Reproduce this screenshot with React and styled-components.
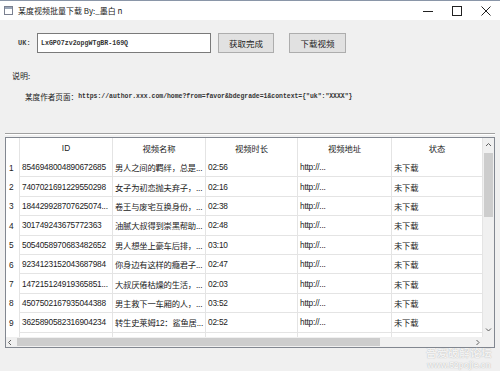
import React from "react";
import styled, { createGlobalStyle } from "styled-components";

const GlobalStyle = createGlobalStyle`
  html, body {
    margin: 0;
    padding: 0;
    width: 500px;
    height: 371px;
    overflow: hidden;
    background: #f0f0f0;
  }
  * {
    box-sizing: border-box;
  }
`;

const CJK = `"Noto Sans CJK SC", "Noto Sans", sans-serif`;
const TABLE_FONT = `"Liberation Sans", "Noto Sans CJK SC", sans-serif`;

const AUTHOR_URL =
  'https://author.xxx.com/home?from=favor&bdegrade=1&context={"uk":"XXXX"}';

const Window = styled.div`
  position: relative;
  width: 500px;
  height: 371px;
  background: #f0f0f0;
  font-family: ${CJK};
  color: #1a1a1a;
  overflow: hidden;
`;

const TitleBar = styled.div`
  display: flex;
  align-items: center;
  justify-content: space-between;
  height: 20px;
  background: #fff;
  border-top: 1px solid #8a96a8;
`;

const TitleLeft = styled.div`
  display: flex;
  align-items: center;
  gap: 5px;
  padding-left: 4px;
`;

const Title = styled.span`
  font-size: 8px;
  color: #222;
  line-height: 1;
`;

const Controls = styled.div`
  display: flex;
  height: 100%;
`;

const Ctl = styled.div`
  width: 29px;
  display: flex;
  align-items: center;
  justify-content: center;
`;

const Body = styled.div`
  display: flex;
  flex-direction: column;
  padding: 13px 5px 0 5px;
`;

const FormRow = styled.div`
  display: flex;
  align-items: center;
  padding-left: 13px;
`;

const Label = styled.span`
  width: 19px;
  font-family: "Liberation Mono", monospace;
  font-size: 7px;
  font-weight: bold;
  color: #444;
`;

const Field = styled.div`
  width: 174px;
  height: 20px;
  background: #fff;
  border: 1px solid #7a7a7a;
  display: flex;
  align-items: center;
  padding-left: 3px;
  font-family: "Liberation Mono", monospace;
  font-size: 6.6px;
  font-weight: bold;
  color: #333;
`;

const Button = styled.div`
  width: ${(p) => p.$w}px;
  height: 20px;
  margin-left: ${(p) => p.$gap}px;
  background: #e1e1e1;
  border: 1px solid #adadad;
  display: flex;
  align-items: center;
  justify-content: center;
  font-size: 8.5px;
  color: #222;
`;

const Section = styled.div`
  margin-top: 17px;
  padding-left: 7px;
  height: 12px;
  font-size: 8px;
  line-height: 12px;
  color: #222;
`;

const Note = styled.div`
  margin-top: 9px;
  padding-left: 20px;
  height: 12px;
  line-height: 12px;
  display: flex;
  align-items: center;
  white-space: nowrap;
`;

const NoteCjk = styled.span`
  font-size: 7.6px;
  color: #222;
`;

const Url = styled.span`
  font-family: "Liberation Mono", monospace;
  font-size: 6.45px;
  font-weight: bold;
  color: #333;
`;

const Divider = styled.div`
  margin-top: 30px;
  width: 490px;
  height: 2px;
  border-top: 1px solid #a0a0a0;
  border-bottom: 1px solid #ffffff;
`;

const TableFrame = styled.div`
  margin-top: 2px;
  width: 490px;
  height: 211px;
  border: 1px solid #828790;
  background: #fff;
  display: grid;
  grid-template-columns: 477px 11px;
  grid-template-rows: 199px 10px;
  font-family: ${TABLE_FONT};
`;

const Viewport = styled.div`
  overflow: hidden;
  background: #fff;
`;

const COLS = "14px 93px 93px 92px 94px 91px";

const HeadRow = styled.div`
  display: grid;
  grid-template-columns: ${COLS};
  height: 20px;
`;

const HeadCell = styled.div`
  display: flex;
  align-items: center;
  justify-content: center;
  font-size: 8.3px;
  color: #222;
  border-right: 1px solid #e4e4e4;
`;

const Row = styled.div`
  display: grid;
  grid-template-columns: ${COLS};
  height: 19.4px;
`;

const RowNum = styled.div`
  display: flex;
  align-items: center;
  padding-left: 3px;
  font-size: 8.3px;
  color: #222;
  border-right: 1px solid #e4e4e4;
`;

const Cell = styled.div`
  display: flex;
  align-items: center;
  padding-left: 2px;
  font-size: 8.3px;
  letter-spacing: -0.2px;
  color: #222;
  white-space: nowrap;
  overflow: hidden;
  border-right: 1px solid #e4e4e4;
  border-bottom: 1px solid #e4e4e4;
`;

const VScroll = styled.div`
  display: flex;
  flex-direction: column;
  background: #f0f0f0;
`;

const HScroll = styled.div`
  display: flex;
  align-items: center;
  background: #f0f0f0;
`;

const Corner = styled.div`
  background: #f0f0f0;
`;

const Arrow = styled.div`
  flex: 0 0 ${(p) => p.$size}px;
  display: flex;
  align-items: center;
  justify-content: center;
`;

const VThumb = styled.div`
  height: 64px;
  margin: 0 1px;
  background: #cdcdcd;
`;

const Spacer = styled.div`
  flex: 1;
`;

const HThumb = styled.div`
  width: 363px;
  height: 8px;
  margin-left: 2px;
  background: #cdcdcd;
`;

const Watermark = styled.div`
  position: absolute;
  right: 8px;
  bottom: 2px;
  display: flex;
  flex-direction: column;
  align-items: center;
  color: rgba(255, 255, 255, 0.85);
  text-shadow: 0 0 1px rgba(120, 120, 120, 0.6);
  line-height: 1;
`;

const WmTitle = styled.span`
  font-size: 10.5px;
  font-weight: bold;
  letter-spacing: 0.5px;
`;

const WmUrl = styled.span`
  font-family: "Liberation Sans", sans-serif;
  font-size: 8.5px;
  font-weight: bold;
  margin-top: 2px;
`;

const Chevron = ({ dir }) => {
  const pts = {
    up: "1,4 3.5,1.5 6,4",
    down: "1,1.5 3.5,4 6,1.5",
    left: "4,1 1.5,3.5 4,6",
    right: "1.5,1 4,3.5 1.5,6",
  }[dir];
  return (
    <svg width="7" height="7" viewBox="0 0 7 7">
      <polyline points={pts} fill="none" stroke="#606060" strokeWidth="1" />
    </svg>
  );
};

const rows = [
  ["1", "8546948004890672685", "男人之间的羁绊，总是...", "02:56"],
  ["2", "7407021691229550298", "女子为初恋抛夫弃子，...", "02:16"],
  ["3", "184429928707625074...", "卷王与废宅互换身份，...", "02:38"],
  ["4", "301749243675772363", "油腻大叔得到崇黑帮助...", "02:48"],
  ["5", "5054058970683482652", "男人想坐上豪车后排，...", "03:10"],
  ["6", "9234123152043687984", "你身边有这样的瘾君子...", "02:47"],
  ["7", "147215124919365851...", "大叔厌倦枯燥的生活，...", "02:03"],
  ["8", "4507502167935044388", "男主救下一车厢的人，...", "03:52"],
  ["9", "3625890582316904234", "转生史莱姆12：鲨鱼居...", "02:52"],
];

const headers = ["", "ID", "视频名称", "视频时长", "视频地址", "状态"];

const App = () => {
  return (
    <Window>
      <GlobalStyle />
      <TitleBar>
        <TitleLeft>
          <svg width="9" height="9" viewBox="0 0 9 9">
            <rect x="0.5" y="0.5" width="8" height="8" fill="#fff" stroke="#7a8090" />
            <rect x="1" y="1" width="7" height="2" fill="#9aa6b8" />
          </svg>
          <Title>某度视频批量下载 By:_墨白 n</Title>
        </TitleLeft>
        <Controls>
          <Ctl>
            <svg width="10" height="10" viewBox="0 0 10 10">
              <line x1="0" y1="5.5" x2="10" y2="5.5" stroke="#222" strokeWidth="1" />
            </svg>
          </Ctl>
          <Ctl>
            <svg width="10" height="10" viewBox="0 0 10 10">
              <rect x="0.5" y="0.5" width="9" height="9" fill="none" stroke="#222" strokeWidth="1" />
            </svg>
          </Ctl>
          <Ctl>
            <svg width="10" height="10" viewBox="0 0 10 10">
              <line x1="0.5" y1="0.5" x2="9.5" y2="9.5" stroke="#222" strokeWidth="1" />
              <line x1="9.5" y1="0.5" x2="0.5" y2="9.5" stroke="#222" strokeWidth="1" />
            </svg>
          </Ctl>
        </Controls>
      </TitleBar>

      <Body>
        <FormRow>
          <Label>UK:</Label>
          <Field>LxGPO7zv2opgWTgBR-1G9Q</Field>
          <Button $w={56} $gap={7}>获取完成</Button>
          <Button $w={57} $gap={15}>下载视频</Button>
        </FormRow>

        <Section>说明:</Section>
        <Note>
          <NoteCjk>某度作者页面：</NoteCjk>
          <Url>{AUTHOR_URL}</Url>
        </Note>

        <Divider />

        <TableFrame>
          <Viewport>
            <HeadRow>
              {headers.map((h, i) => (
                <HeadCell key={i}>{h}</HeadCell>
              ))}
            </HeadRow>
            {rows.map((r) => (
              <Row key={r[0]}>
                <RowNum>{r[0]}</RowNum>
                <Cell>{r[1]}</Cell>
                <Cell>{r[2]}</Cell>
                <Cell>{r[3]}</Cell>
                <Cell>http://...</Cell>
                <Cell>未下载</Cell>
              </Row>
            ))}
            <Row>
              <RowNum />
              <Cell />
              <Cell />
              <Cell />
              <Cell />
              <Cell />
            </Row>
          </Viewport>
          <VScroll>
            <Arrow $size={15}>
              <Chevron dir="up" />
            </Arrow>
            <VThumb />
            <Spacer />
            <Arrow $size={14}>
              <Chevron dir="down" />
            </Arrow>
          </VScroll>
          <HScroll>
            <Arrow $size={9}>
              <Chevron dir="left" />
            </Arrow>
            <HThumb />
            <Spacer />
            <Arrow $size={10}>
              <Chevron dir="right" />
            </Arrow>
          </HScroll>
          <Corner />
        </TableFrame>
      </Body>

      <Watermark>
        <WmTitle>吾爱破解论坛</WmTitle>
        <WmUrl>www.52pojie.cn</WmUrl>
      </Watermark>
    </Window>
  );
};

export default App;
